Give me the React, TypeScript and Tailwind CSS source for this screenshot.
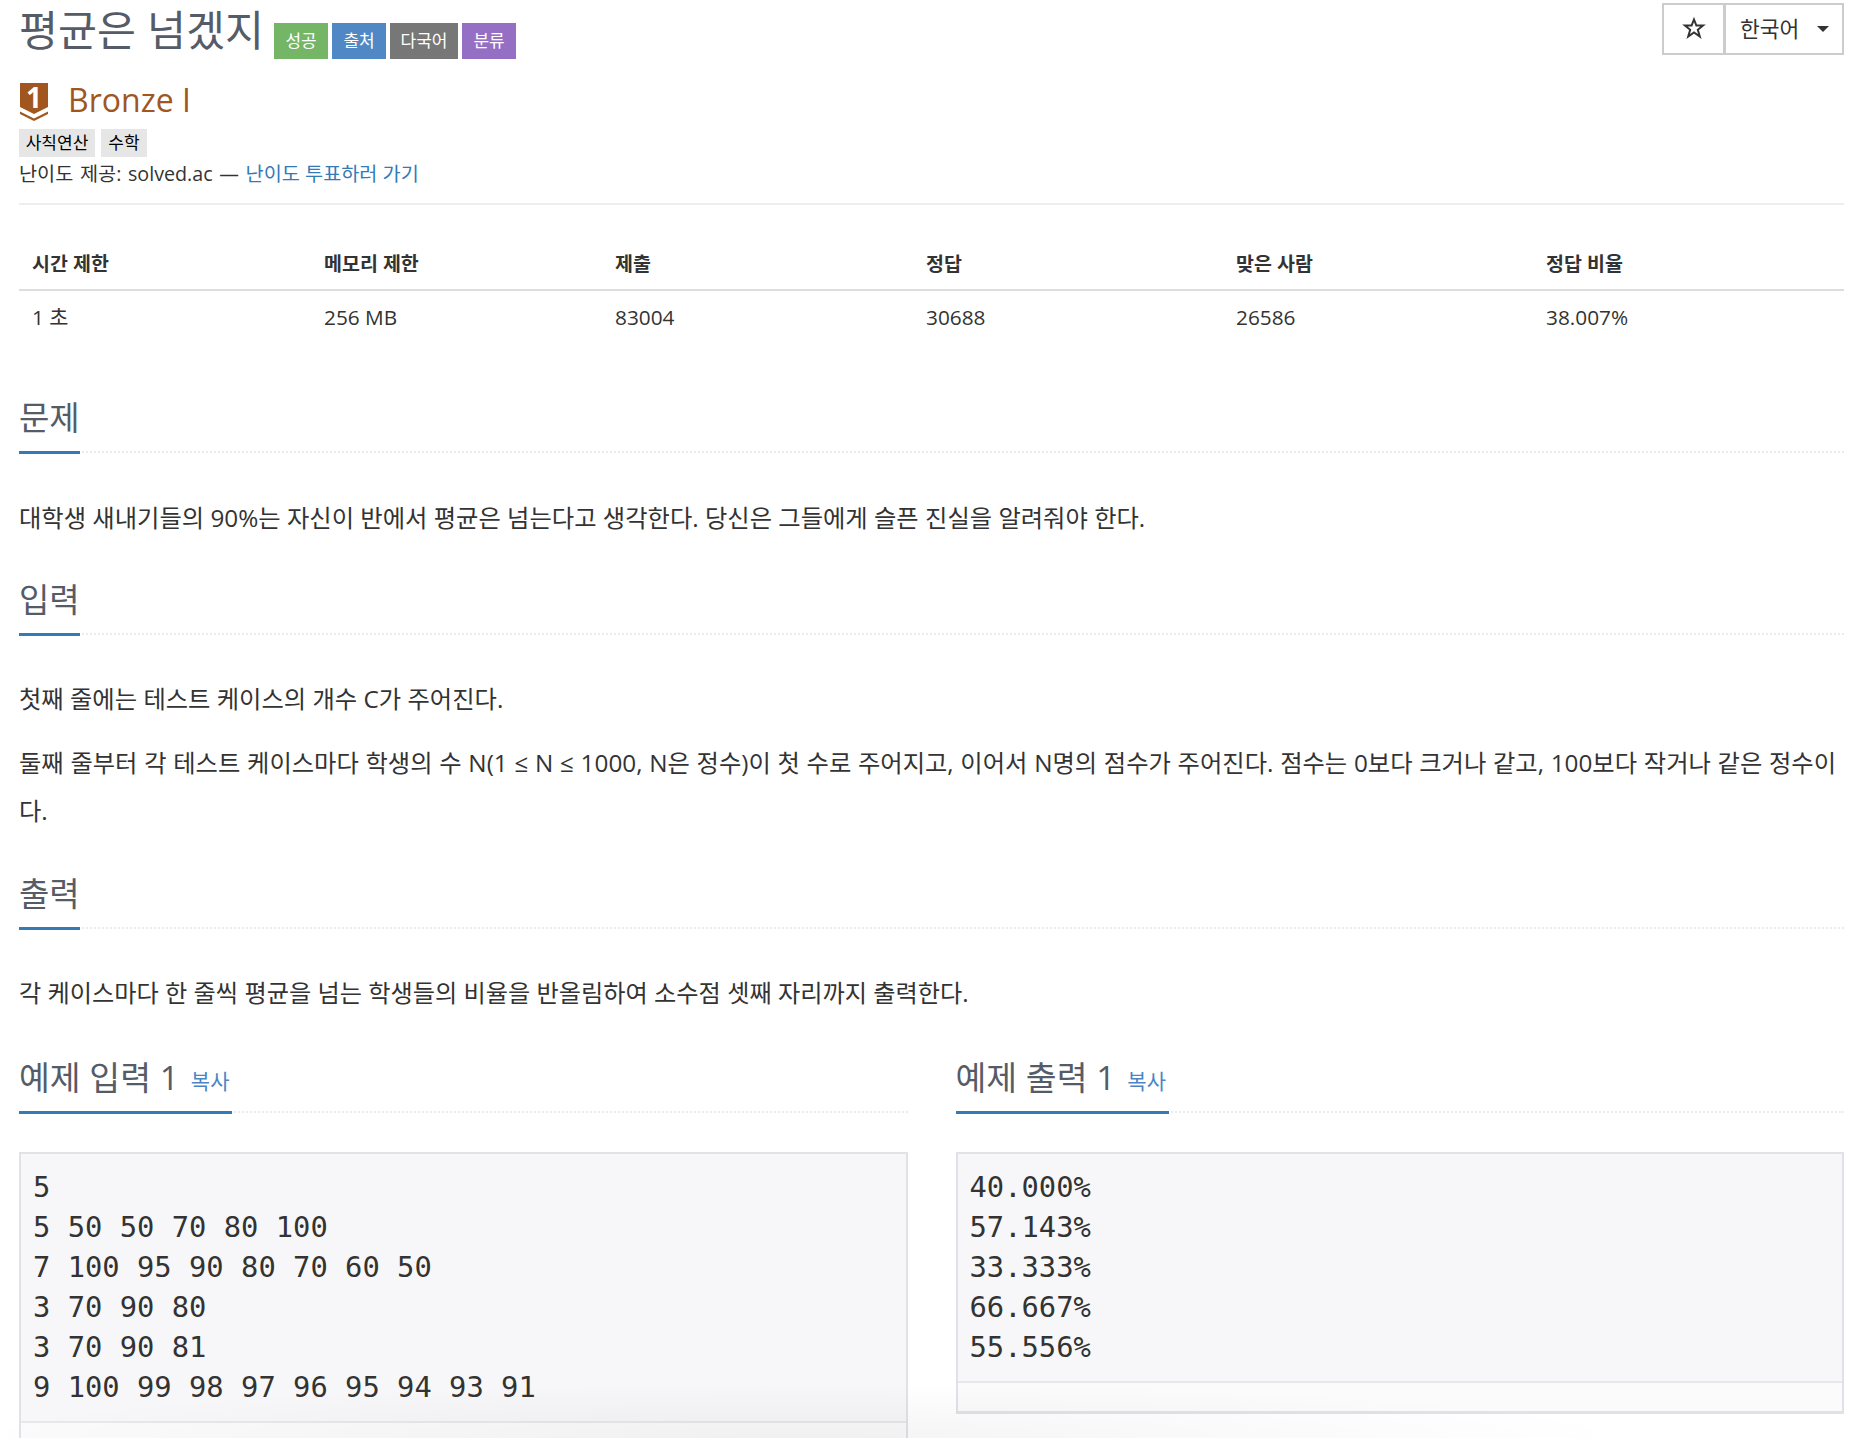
const sans = 'font-["Open_Sans","Noto_Sans_CJK_KR",sans-serif]';

const stats = [
  ['시간 제한', '1 초'],
  ['메모리 제한', '256 MB'],
  ['제출', '83004'],
  ['정답', '30688'],
  ['맞은 사람', '26586'],
  ['정답 비율', '38.007%'],
];

const sampleIn = `5
5 50 50 70 80 100
7 100 95 90 80 70 60 50
3 70 90 80
3 70 90 81
9 100 99 98 97 96 95 94 93 91`;

const sampleOut = `40.000%
57.143%
33.333%
66.667%
55.556%`;

function Heading({ title, copy }: { title: string; copy?: boolean }) {
  return (
    <div className="border-b-2 border-dotted border-[#ebebef]">
      <div className={`-mb-[3px] inline-flex h-[70px] items-center gap-[12px] border-b-[3px] border-[#337ab7] leading-none text-[#555c68] ${copy ? 'pr-[3px] text-[33.5px]' : 'text-[33px]'}`}>
        <span>{title}</span>
        {copy && <span className="mt-[8px] text-[21px] text-[#4a86c5]">복사</span>}
      </div>
    </div>
  );
}

function SampleBox({ text, inputBox }: { text: string; inputBox?: boolean }) {
  return (
    <div className="mt-[39px] border-2 border-b-[3px] border-[#e1e1e8] bg-[#f7f7f9]">
      <pre className='px-[12px] pt-[13px] pb-[14px] font-["DejaVu_Sans_Mono",monospace] text-[28.8px] leading-[40px] text-[#333]'>
        {text}
      </pre>
      <div className={`border-t-2 border-[#e8e8ec] bg-[#fbfbfb] ${inputBox ? 'h-[60px]' : 'h-[30px]'}`} />
    </div>
  );
}

export default function App() {
  return (
    <div className={`${sans} relative h-[1438px] overflow-hidden bg-white px-[19px] pr-[22px] text-[#333]`}>
      {/* Title row */}
      <div className="flex h-[64px] items-start justify-between">
        <div className="flex items-start">
          <h1 className="mt-[3px] text-[42.4px] leading-[54px] font-normal text-[#555c68]">평균은 넘겠지</h1>
          <div className="mt-[23px] ml-[10px] flex gap-[4px] text-[17px] text-white">
            <span className="flex h-[36px] w-[54px] items-center justify-center bg-[#74b566]">성공</span>
            <span className="flex h-[36px] w-[54px] items-center justify-center bg-[#5088c5]">출처</span>
            <span className="flex h-[36px] w-[68px] items-center justify-center bg-[#777777]">다국어</span>
            <span className="flex h-[36px] w-[54px] items-center justify-center bg-[#946fc4]">분류</span>
          </div>
        </div>
        <div className="mt-[3px] flex h-[52px] text-[21.5px]">
          <div className="flex w-[64px] items-center justify-center border-2 border-r-[3px] border-[#cccccc]">
            <svg width="24" height="24" viewBox="0 0 24 24" fill="none" stroke="#333" strokeWidth="2" className="-mt-[3px]">
              <path d="M12 3.5L14.4 9.6H21L15.8 13.8L17.8 20.5L12 16.5L6.2 20.5L8.2 13.8L3 9.6H9.6Z" />
            </svg>
          </div>
          <div className="flex w-[118px] items-center border-2 border-l-0 border-[#cccccc] pl-[14px]">
            <span>한국어</span>
            <span className="ml-[18px] h-0 w-0 border-x-[6px] border-t-[6px] border-x-transparent border-t-[#333]" />
          </div>
        </div>
      </div>

      {/* Tier */}
      <div className="mt-[17px] flex h-[38px] items-center">
        <div className="relative mt-[3px] h-[38px] w-[30px] shrink-0">
          <svg width="30" height="38" viewBox="0 0 30 38">
            <path d="M1 0H29V24L15 31L1 24Z" fill="#a0561e" />
            <path d="M1 28.5L15 35.5L29 28.5V31L15 38L1 31Z" fill="#a0561e" />
          </svg>
          <span className="absolute inset-x-0 top-0 text-center text-[28px] leading-[28px] font-bold text-white">1</span>
        </div>
        <span className="ml-[19px] text-[32px] leading-none text-[#a0561e]">Bronze I</span>
      </div>

      {/* Tags */}
      <div className="mt-[10px] flex gap-[6px] text-[17px] text-black">
        <span className="flex h-[28px] w-[76px] items-center justify-center bg-[#e6e6e6]">사칙연산</span>
        <span className="flex h-[28px] w-[46px] items-center justify-center bg-[#e6e6e6]">수학</span>
      </div>
      <p className="mt-[1px] text-[19.7px] leading-[31px]">
        <span className="[word-spacing:1.5px]">난이도 제공: solved.ac — </span>
        <span className="text-[#337ab7]">난이도 투표하러 가기</span>
      </p>
      <div className="mt-[14px] border-b-2 border-[#eeeeee]" />

      {/* Stats table */}
      <div className="mt-[34px] grid grid-cols-[292px_291px_311px_310px_310px_1fr]">
        {stats.map(([head]) => (
          <div key={head} className="h-[52px] border-b-2 border-[#dddddd] pl-[13px] text-[19.5px] leading-[50px] font-semibold">{head}</div>
        ))}
        {stats.map(([head, value]) => (
          <div key={head} className="h-[56px] pl-[13px] text-[20.8px] leading-[52px]">{value}</div>
        ))}
      </div>

      {/* Problem */}
      <section className="mt-[37px]">
        <Heading title="문제" />
        <p className="mt-[41px] text-[24.3px] leading-[48px]">대학생 새내기들의 90%는 자신이 반에서 평균은 넘는다고 생각한다. 당신은 그들에게 슬픈 진실을 알려줘야 한다.</p>
      </section>

      <section className="mt-[24px]">
        <Heading title="입력" />
        <p className="mt-[40px] text-[24.3px] leading-[48px]">첫째 줄에는 테스트 케이스의 개수 C가 주어진다.</p>
        <p className="mt-[16px] text-[24.3px] leading-[48px] [word-spacing:0.4px]">둘째 줄부터 각 테스트 케이스마다 학생의 수 N(1 ≤ N ≤ 1000, N은 정수)이 첫 수로 주어지고, 이어서 N명의 점수가 주어진다. 점수는 0보다 크거나 같고, 100보다 작거나 같은 정수이다.</p>
      </section>

      <section className="mt-[25px]">
        <Heading title="출력" />
        <p className="mt-[40px] text-[24.2px] leading-[48px]">각 케이스마다 한 줄씩 평균을 넘는 학생들의 비율을 반올림하여 소수점 셋째 자리까지 출력한다.</p>
      </section>

      {/* Samples */}
      <div className="mt-[27px] grid grid-cols-2 gap-x-[48px]">
        <div>
          <Heading title="예제 입력 1" copy />
          <SampleBox text={sampleIn} inputBox />
        </div>
        <div>
          <Heading title="예제 출력 1" copy />
          <SampleBox text={sampleOut} />
        </div>
      </div>

      {/* Faint shadow along the bottom edge */}
      <div className="pointer-events-none absolute inset-x-0 bottom-0 h-[70px] bg-[radial-gradient(ellipse_840px_56px_at_800px_100%,rgba(0,0,0,0.045),transparent)]" />
    </div>
  );
}
